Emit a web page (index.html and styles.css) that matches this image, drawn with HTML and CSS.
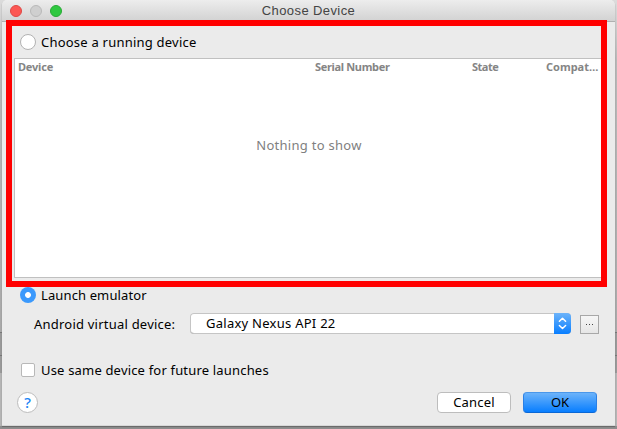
FILE: index.html
```html
<!DOCTYPE html>
<html lang="en">
<head>
<meta charset="utf-8">
<title>Choose Device</title>
<link rel="stylesheet" href="styles.css">
</head>
<body>
<main class="window">
  <header class="titlebar">
    <div class="lights"><i class="light close"></i><i class="light minimize"></i><i class="light expand"></i></div>
    <h1 class="title"><span>Choose Device</span></h1>
  </header>
  <label class="row running"><i class="radio"></i><span class="t-running">Choose a running device</span></label>
  <section class="table">
    <div class="head"><span class="h-device">Device</span><span class="h-serial">Serial Number</span><span class="h-state">State</span><span class="h-compat">Compat…</span></div>
    <p class="empty"><span>Nothing to show</span></p>
  </section>
  <label class="row launch"><i class="radio on"></i><span class="t-launch">Launch emulator</span></label>
  <div class="row avd">
    <span class="t-avd">Android virtual device:</span>
    <div class="select"><span class="t-galaxy">Galaxy Nexus API 22</span>
      <svg class="arrows" width="17" height="21" viewBox="0 0 17 21"><path d="M5.4 8.3 8.5 5.3l3.1 3M5.4 12.5l3.1 3 3.1-3" fill="none" stroke="#fff" stroke-width="1.5" stroke-linecap="round" stroke-linejoin="round"/></svg>
    </div>
    <button class="more"><svg width="9" height="3" viewBox="0 0 9 3"><path d="M1 1h1v1H1zM4 1h1v1H4zM7 1h1v1H7z" fill="#444"/></svg></button>
  </div>
  <label class="row same"><i class="check"></i><span class="t-same">Use same device for future launches</span></label>
  <footer class="row footer">
    <button class="help">?</button>
    <button class="btn cancel"><span>Cancel</span></button>
    <button class="btn ok"><span>OK</span></button>
  </footer>
  <div class="highlight"></div>
</main>
</body>
</html>
```
FILE: styles.css
```css
* { box-sizing: border-box; }
body {
  margin: 0;
  height: 429px;
  overflow: hidden;
  padding: 0 2px;
  background: linear-gradient(#dcdcdc 0, #b8b8b8 60px, #a9a9a9 332px, #777 332px 333px, #999 333px 355px, #777 355px 356px, #999 356px 373px, #b5b5b5 373px 426px, #8d8d8d 426px);
  font: 13px/18px "Noto Sans", sans-serif;
  color: #000;
}
span { white-space: nowrap; }
button { font: inherit; padding: 0; margin: 0; }
.window {
  position: relative;
  width: 613px;
  height: 426px;
  background: #ebebeb;
  border-radius: 5px 5px 0 0;
  border-bottom: 1px solid #d8d8d8;
  box-shadow: 0 1px 1px #666;
}
.titlebar {
  display: flex;
  align-items: center;
  height: 22px;
  background: linear-gradient(#ededed, #d2d2d2);
  border-bottom: 1px solid #b0b0b0;
  border-radius: 5px 5px 0 0;
}
.lights { display: flex; gap: 8px; width: 60px; padding-left: 8px; }
.light { width: 12px; height: 12px; border-radius: 50%; border: 1px solid; }
.close { background: #fc5753; border-color: #df4744; }
.minimize { background: #cfcfcf; border-color: #b9b9b9; }
.expand { background: #2fc840; border-color: #27aa35; }
.title {
  flex: 1;
  margin: 0 60px 0 0;
  text-align: center;
  font: 13px/23px "Liberation Sans", sans-serif;
  color: #444;
}
.title span { letter-spacing: 0.4px; }
.row { display: flex; align-items: center; }
.running { height: 36px; padding: 4px 0 0 18px; gap: 5px; }
.radio {
  width: 16px;
  height: 16px;
  border-radius: 50%;
  background: #fff;
  border: 1px solid #b2b2b2;
}
.radio.on { border: 0; background: radial-gradient(circle, #fff 0 2.5px, #3b99fc 3.3px); }
.table {
  height: 220px;
  margin-left: 12px;
  width: 590px;
  background: #fff;
  border: 1px solid #c0c0c0;
}
.head {
  display: grid;
  grid-template-columns: 297px 157px 74px auto;
  padding-left: 3px;
  height: 17px;
  color: #858585;
  font-size: 11px;
  font-weight: 700;
  line-height: 16px;
}
.h-device { letter-spacing: -0.2px; }
.h-serial { letter-spacing: -0.33px; }
.h-state { letter-spacing: -0.5px; }
.empty { margin: 60px 0 0; text-align: center; color: #808080; letter-spacing: 0.28px; }
.launch { height: 34px; padding-left: 18px; gap: 5px; }
.avd { height: 23px; padding-left: 32px; }
.t-running { letter-spacing: 0.22px; }
.t-launch { letter-spacing: 0.12px; }
.t-avd { width: 156px; letter-spacing: 0.22px; }
.t-galaxy { letter-spacing: 0.26px; }
.t-same { letter-spacing: 0.18px; }
.cancel { letter-spacing: 0.2px; }
.select {
  display: flex;
  justify-content: space-between;
  align-items: center;
  width: 381px;
  height: 21px;
  padding-left: 16px;
  background: #fff;
  border-radius: 4px;
  box-shadow: inset 0 0 0 1px #c5c5c5, inset 0 -1px 0 #a8a8a8;
}
.t-galaxy { margin-top: -1px; }
.arrows { background: linear-gradient(#6cb3fa, #087eff); border-radius: 0 4px 4px 0; }
.more {
  display: flex;
  align-items: center;
  justify-content: center;
  width: 19px;
  height: 19px;
  margin: 1px 0 0 9px;
  border: 1px solid #a8a8a8;
  background: linear-gradient(#f6f6f6, #e6e6e6);
}
.same { height: 40px; margin-top: 15px; padding-left: 19px; gap: 6px; }
.check { width: 14px; height: 14px; background: #fff; border: 1px solid #b8b8b8; border-radius: 2px; }
.footer { height: 24px; padding-left: 15px; }
.help {
  width: 21px;
  height: 21px;
  margin-right: 399px;
  border: 1px solid #bdbdbd;
  border-radius: 50%;
  background: #fff;
  color: #1a84f5;
  font-size: 15px;
  font-weight: 500;
  line-height: 18px;
}
.btn { width: 74px; height: 21px; border-radius: 4px; line-height: 19px; border: 1px solid #bdbdbd; background: #fff; }
.ok { margin-left: 12px; border-color: #4a97ea #2b80e5 #0a67d5; background: linear-gradient(#6cb3fa, #087eff); }
.highlight { position: absolute; left: 4px; top: 20px; width: 601px; height: 267px; border: 6px solid #f00; }
```
